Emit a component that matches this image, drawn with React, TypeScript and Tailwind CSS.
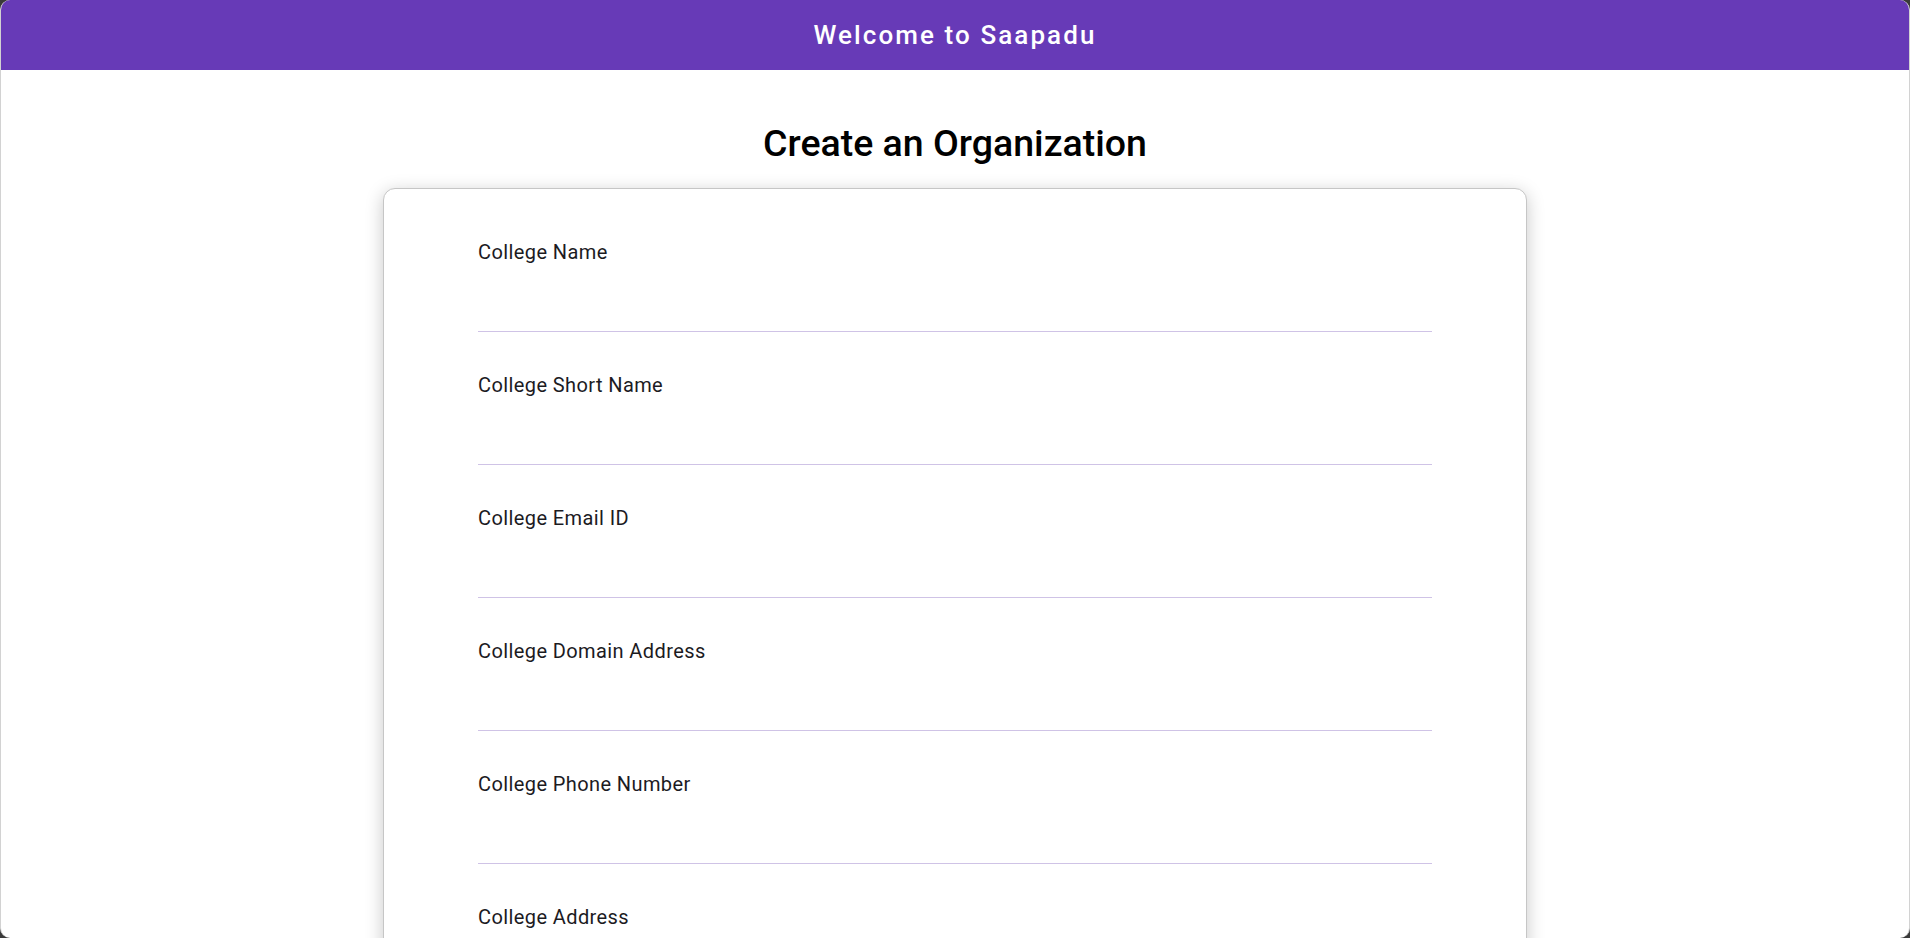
const fields = [
  "College Name",
  "College Short Name",
  "College Email ID",
  "College Domain Address",
  "College Phone Number",
  "College Address",
];

export default function App() {
  return (
    <div className="h-[938px] w-[1910px] overflow-hidden bg-[#3a3a3a] font-['Roboto',sans-serif]">
      <div className="flex h-full flex-col overflow-hidden rounded-[10px] border-x border-[#d2d2d2] bg-white">
        {/* HEADER */}
        <header className="flex h-[70px] shrink-0 items-center justify-center bg-[#673ab7]">
          <span className="text-[26px] font-medium tracking-[0.08em] text-white">
            Welcome to Saapadu
          </span>
        </header>
        <main className="flex flex-col items-center">
          <h1 className="mt-[51px] text-[37.5px] leading-[44px] font-medium text-black">
            Create an Organization
          </h1>
          <div className="mt-[23px] w-[1144px] rounded-[12px] border border-[#c6c6c6] bg-white px-[94px] pt-[51px] pb-10 shadow-[0_4px_18px_rgba(0,0,0,0.22)]">
            <div className="flex flex-col gap-[41px]">
              {fields.map((label) => (
                <div key={label} className="flex flex-col">
                  <label className="text-[20px] leading-[24px] tracking-[0.02em] text-[#1c1b1f]">
                    {label}
                  </label>
                  <input className="h-[68px] border-b border-[#cfc3e6] bg-transparent text-[20px] outline-none" />
                </div>
              ))}
            </div>
          </div>
        </main>
      </div>
    </div>
  );
}
